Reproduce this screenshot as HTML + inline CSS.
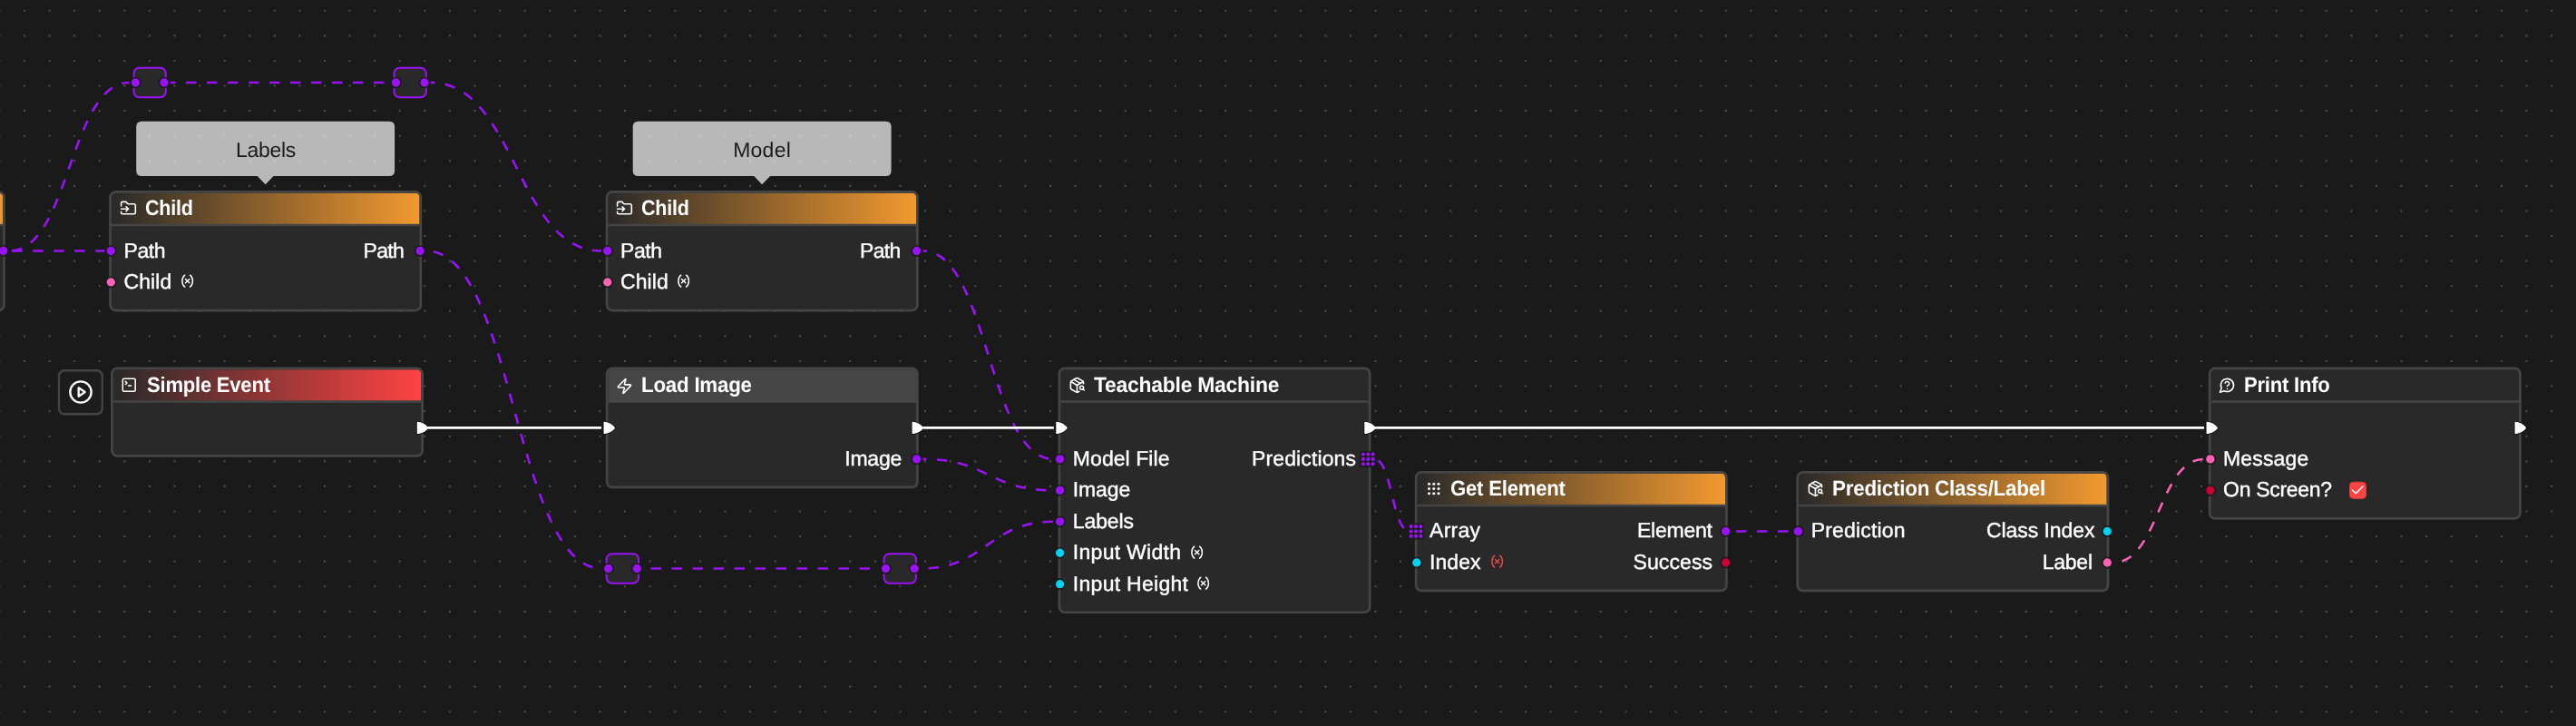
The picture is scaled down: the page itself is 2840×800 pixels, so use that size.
<!DOCTYPE html><html lang="en"><head><meta charset="utf-8"><title>Node graph</title><style>
html,body{margin:0;padding:0}
body{width:2840px;height:800px;overflow:hidden;background:#1a1a1a;position:relative;font-family:"Liberation Sans",sans-serif}
.layer{position:absolute;left:0;top:0}
.wrap{position:absolute;left:0;top:0;width:2840px;height:800px;will-change:transform}
.t{position:absolute;white-space:nowrap;line-height:1;color:#fff;text-rendering:geometricPrecision}
.ic{position:absolute;overflow:visible}
</style></head><body><svg class="layer" width="2840" height="800" viewBox="0 0 2840 800"><g stroke="#4c4c4c" stroke-width="2.1" stroke-dasharray="2.1 25.485" fill="none"><path d="M-1.65,11.80 H2838"/><path d="M-1.65,39.39 H2838"/><path d="M-1.65,66.97 H2838"/><path d="M-1.65,94.56 H2838"/><path d="M-1.65,122.14 H2838"/><path d="M-1.65,149.73 H2838"/><path d="M-1.65,177.31 H2838"/><path d="M-1.65,204.90 H2838"/><path d="M-1.65,232.48 H2838"/><path d="M-1.65,260.07 H2838"/><path d="M-1.65,287.65 H2838"/><path d="M-1.65,315.24 H2838"/><path d="M-1.65,342.82 H2838"/><path d="M-1.65,370.40 H2838"/><path d="M-1.65,397.99 H2838"/><path d="M-1.65,425.57 H2838"/><path d="M-1.65,453.16 H2838"/><path d="M-1.65,480.74 H2838"/><path d="M-1.65,508.33 H2838"/><path d="M-1.65,535.91 H2838"/><path d="M-1.65,563.50 H2838"/><path d="M-1.65,591.08 H2838"/><path d="M-1.65,618.67 H2838"/><path d="M-1.65,646.25 H2838"/><path d="M-1.65,673.84 H2838"/><path d="M-1.65,701.43 H2838"/><path d="M-1.65,729.01 H2838"/><path d="M-1.65,756.60 H2838"/><path d="M-1.65,784.18 H2838"/></g></svg><svg class="layer" width="2840" height="800" viewBox="0 0 2840 800"><g fill="none" stroke-width="2.6" stroke-dasharray="11.5 11.5"><path d="M10.65,276.50 L115.40,276.50" stroke="#9a13f8" stroke-dashoffset="20.46"/><path d="M10.65,276.50 C76.62,276.50 76.63,91.00 142.60,91.00" stroke="#9a13f8" stroke-dashoffset="20.70"/><path d="M187.90,91.00 L429.60,91.00" stroke="#9a13f8" stroke-dashoffset="5.90"/><path d="M474.90,91.00 C568.90,91.00 568.90,276.50 662.90,276.50" stroke="#9a13f8" stroke-dashoffset="7.09"/><path d="M470.00,276.50 C566.90,276.50 566.90,626.50 663.80,626.50" stroke="#9a13f8" stroke-dashoffset="15.10"/><path d="M709.10,626.50 L969.70,626.50" stroke="#9a13f8" stroke-dashoffset="14.60"/><path d="M1015.00,626.50 C1088.35,626.50 1088.35,574.80 1161.70,574.80" stroke="#9a13f8" stroke-dashoffset="14.59"/><path d="M1017.50,276.50 C1089.60,276.50 1089.60,505.90 1161.70,505.90" stroke="#9a13f8" stroke-dashoffset="7.18"/><path d="M1017.55,505.90 C1089.62,505.90 1089.62,540.35 1161.70,540.35" stroke="#9a13f8" stroke-dashoffset="7.74"/><path d="M1515.20,505.90 C1534.68,505.90 1534.68,585.50 1554.15,585.50" stroke="#9a13f8" stroke-dashoffset="18.12"/><path d="M1909.55,585.50 L1975.55,585.50" stroke="#9a13f8" stroke-dashoffset="18.55"/><path d="M2330.15,619.95 C2380.05,619.95 2380.05,505.90 2429.95,505.90" stroke="#fa62b5" stroke-dashoffset="13.49"/></g></svg><svg class="layer" width="2840" height="800" viewBox="0 0 2840 800"><defs><linearGradient id="go" x1="0" y1="0" x2="1" y2="0"><stop offset="0" stop-color="#f2992f" stop-opacity="0"/><stop offset="0.03" stop-color="#f2992f" stop-opacity="0.03"/><stop offset="1" stop-color="#f2992f"/></linearGradient><linearGradient id="gr" x1="0" y1="0" x2="1" y2="0"><stop offset="0" stop-color="#ff4343" stop-opacity="0"/><stop offset="0.03" stop-color="#ff4343" stop-opacity="0.03"/><stop offset="1" stop-color="#ff4343"/></linearGradient></defs><rect x="-337.80" y="211.35" width="342.30" height="130.70" rx="5.95" fill="#292929"/><path d="M-336.45,247.30 V217.30 Q-336.45,212.70 -331.85,212.70 H-1.45 Q3.15,212.70 3.15,217.30 V247.30Z" fill="url(#go)"/><rect x="-336.45" y="246.80" width="339.60" height="2.5" fill="#454545"/><rect x="-337.80" y="211.35" width="342.30" height="130.70" rx="5.95" fill="none" stroke="#454545" stroke-width="2.7"/><rect x="121.55" y="211.35" width="342.30" height="130.70" rx="5.95" fill="#292929"/><path d="M122.90,247.30 V217.30 Q122.90,212.70 127.50,212.70 H457.90 Q462.50,212.70 462.50,217.30 V247.30Z" fill="url(#go)"/><rect x="122.90" y="246.80" width="339.60" height="2.5" fill="#454545"/><rect x="121.55" y="211.35" width="342.30" height="130.70" rx="5.95" fill="none" stroke="#454545" stroke-width="2.7"/><rect x="669.05" y="211.35" width="342.30" height="130.70" rx="5.95" fill="#292929"/><path d="M670.40,247.30 V217.30 Q670.40,212.70 675.00,212.70 H1005.40 Q1010.00,212.70 1010.00,217.30 V247.30Z" fill="url(#go)"/><rect x="670.40" y="246.80" width="339.60" height="2.5" fill="#454545"/><rect x="669.05" y="211.35" width="342.30" height="130.70" rx="5.95" fill="none" stroke="#454545" stroke-width="2.7"/><rect x="123.35" y="405.85" width="342.30" height="96.60" rx="5.95" fill="#292929"/><path d="M124.70,441.80 V411.80 Q124.70,407.20 129.30,407.20 H459.70 Q464.30,407.20 464.30,411.80 V441.80Z" fill="url(#gr)"/><rect x="124.70" y="441.30" width="339.60" height="2.5" fill="#454545"/><rect x="123.35" y="405.85" width="342.30" height="96.60" rx="5.95" fill="none" stroke="#454545" stroke-width="2.7"/><rect x="669.10" y="405.85" width="342.30" height="131.10" rx="5.95" fill="#292929"/><path d="M670.45,443.70 V411.80 Q670.45,407.20 675.05,407.20 H1005.45 Q1010.05,407.20 1010.05,411.80 V443.70Z" fill="#464646"/><rect x="669.10" y="405.85" width="342.30" height="131.10" rx="5.95" fill="none" stroke="#454545" stroke-width="2.7"/><rect x="1167.85" y="405.85" width="342.30" height="268.90" rx="5.95" fill="#292929"/><rect x="1169.20" y="441.30" width="339.60" height="2.5" fill="#454545"/><rect x="1167.85" y="405.85" width="342.30" height="268.90" rx="5.95" fill="none" stroke="#454545" stroke-width="2.7"/><rect x="1561.10" y="520.35" width="342.30" height="130.60" rx="5.95" fill="#292929"/><path d="M1562.45,556.30 V526.30 Q1562.45,521.70 1567.05,521.70 H1897.45 Q1902.05,521.70 1902.05,526.30 V556.30Z" fill="url(#go)"/><rect x="1562.45" y="555.80" width="339.60" height="2.5" fill="#454545"/><rect x="1561.10" y="520.35" width="342.30" height="130.60" rx="5.95" fill="none" stroke="#454545" stroke-width="2.7"/><rect x="1981.70" y="520.35" width="342.30" height="130.60" rx="5.95" fill="#292929"/><path d="M1983.05,556.30 V526.30 Q1983.05,521.70 1987.65,521.70 H2318.05 Q2322.65,521.70 2322.65,526.30 V556.30Z" fill="url(#go)"/><rect x="1983.05" y="555.80" width="339.60" height="2.5" fill="#454545"/><rect x="1981.70" y="520.35" width="342.30" height="130.60" rx="5.95" fill="none" stroke="#454545" stroke-width="2.7"/><rect x="2436.10" y="405.85" width="342.30" height="165.50" rx="5.95" fill="#292929"/><rect x="2437.45" y="441.30" width="339.60" height="2.5" fill="#454545"/><rect x="2436.10" y="405.85" width="342.30" height="165.50" rx="5.95" fill="none" stroke="#454545" stroke-width="2.7"/><rect x="2590.5" y="531.3" width="18" height="18" rx="4" fill="#ff4444" stroke="#e03c3c" stroke-width="1"/><path d="M2593.4,540 L2597.3,543.7 L2604.9,535.9" fill="none" stroke="#fff" stroke-width="1.5" stroke-linecap="round" stroke-linejoin="round"/><rect x="64.95" y="408.3" width="47.8" height="48" rx="6" fill="#1c1c1c" stroke="#444" stroke-width="2.4"/><rect x="147.50" y="74.75" width="35.3" height="32.5" rx="6" fill="#292929" stroke="#9a13f8" stroke-width="2.0"/><rect x="434.50" y="74.75" width="35.3" height="32.5" rx="6" fill="#292929" stroke="#9a13f8" stroke-width="2.0"/><rect x="668.70" y="610.25" width="35.3" height="32.5" rx="6" fill="#292929" stroke="#9a13f8" stroke-width="2.0"/><rect x="974.60" y="610.25" width="35.3" height="32.5" rx="6" fill="#292929" stroke="#9a13f8" stroke-width="2.0"/><path d="M156.20,133.70 H429.10 Q435.10,133.70 435.10,139.70 V188.05 Q435.10,194.05 429.10,194.05 H301.60 L292.65,203.15 L283.70,194.05 H156.20 Q150.20,194.05 150.20,188.05 V139.70 Q150.20,133.70 156.20,133.70Z" fill="#fff" fill-opacity=".69"/><path d="M703.70,133.70 H976.60 Q982.60,133.70 982.60,139.70 V188.05 Q982.60,194.05 976.60,194.05 H849.10 L840.15,203.15 L831.20,194.05 H703.70 Q697.70,194.05 697.70,188.05 V139.70 Q697.70,133.70 703.70,133.70Z" fill="#fff" fill-opacity=".69"/></svg><div class="wrap"><svg class="ic" style="left:131.70px;top:220.15px;color:#fff" width="18.9" height="18.9" viewBox="0 0 24 24" fill="none" stroke="currentColor" stroke-width="2" stroke-linecap="round" stroke-linejoin="round"><path d="M2 9V5a2 2 0 0 1 2-2h3.9a2 2 0 0 1 1.69.9l.81 1.2a2 2 0 0 0 1.67.9H20a2 2 0 0 1 2 2v10a2 2 0 0 1-2 2H4a2 2 0 0 1-2-2v-1"/><path d="M2 13h10"/><path d="m9 16 3-3-3-3"/></svg><span class="t" style="left:159.70px;top:218.00px;font-size:23.5px;font-weight:700;transform:scaleX(0.9160);transform-origin:0 0;letter-spacing:-0.250px;color:#fff">Child</span><span class="t" style="left:136.50px;top:265.00px;font-size:23.0px;-webkit-text-stroke:0.4px #fff;letter-spacing:-0.437px;color:#fff">Path</span><span class="t" style="left:136.50px;top:299.00px;font-size:23.0px;-webkit-text-stroke:0.4px #fff;letter-spacing:0.083px;color:#fff">Child</span><svg class="ic" style="left:197.80px;top:301.40px;color:#fff" width="17.3" height="17.3" viewBox="0 0 24 24" fill="none" stroke="currentColor" stroke-width="2" stroke-linecap="round" stroke-linejoin="round"><path d="M8 21s-4-3-4-9 4-9 4-9"/><path d="M16 3s4 3 4 9-4 9-4 9"/><path d="M15 9l-6 6"/><path d="M9 9l6 6"/></svg><span class="t" style="left:400.50px;top:265.00px;font-size:23.0px;-webkit-text-stroke:0.4px #fff;letter-spacing:-0.704px;color:#fff">Path</span><svg class="ic" style="left:679.20px;top:220.15px;color:#fff" width="18.9" height="18.9" viewBox="0 0 24 24" fill="none" stroke="currentColor" stroke-width="2" stroke-linecap="round" stroke-linejoin="round"><path d="M2 9V5a2 2 0 0 1 2-2h3.9a2 2 0 0 1 1.69.9l.81 1.2a2 2 0 0 0 1.67.9H20a2 2 0 0 1 2 2v10a2 2 0 0 1-2 2H4a2 2 0 0 1-2-2v-1"/><path d="M2 13h10"/><path d="m9 16 3-3-3-3"/></svg><span class="t" style="left:707.20px;top:218.00px;font-size:23.5px;font-weight:700;transform:scaleX(0.9160);transform-origin:0 0;letter-spacing:-0.250px;color:#fff">Child</span><span class="t" style="left:684.00px;top:265.00px;font-size:23.0px;-webkit-text-stroke:0.4px #fff;letter-spacing:-0.437px;color:#fff">Path</span><span class="t" style="left:684.00px;top:299.00px;font-size:23.0px;-webkit-text-stroke:0.4px #fff;letter-spacing:0.083px;color:#fff">Child</span><svg class="ic" style="left:745.30px;top:301.40px;color:#fff" width="17.3" height="17.3" viewBox="0 0 24 24" fill="none" stroke="currentColor" stroke-width="2" stroke-linecap="round" stroke-linejoin="round"><path d="M8 21s-4-3-4-9 4-9 4-9"/><path d="M16 3s4 3 4 9-4 9-4 9"/><path d="M15 9l-6 6"/><path d="M9 9l6 6"/></svg><span class="t" style="left:948.00px;top:265.00px;font-size:23.0px;-webkit-text-stroke:0.4px #fff;letter-spacing:-0.704px;color:#fff">Path</span><svg class="ic" style="left:133.10px;top:415.15px;color:#fff" width="18.5" height="18.5" viewBox="0 0 24 24" fill="none" stroke="currentColor" stroke-width="2" stroke-linecap="round" stroke-linejoin="round"><rect width="18" height="18" x="3" y="3" rx="2"/><path d="m7 11 2-2-2-2"/><path d="M11 13h4"/></svg><span class="t" style="left:161.50px;top:413.00px;font-size:23.5px;font-weight:700;transform:scaleX(0.9390);transform-origin:0 0;letter-spacing:-0.250px;color:#fff">Simple Event</span><svg class="ic" style="left:678.90px;top:415.90px;color:#fff" width="18.9" height="18.9" viewBox="0 0 24 24" fill="none" stroke="currentColor" stroke-width="2" stroke-linecap="round" stroke-linejoin="round"><path d="M4 14a1 1 0 0 1-.78-1.63l9.9-10.2a.5.5 0 0 1 .86.46l-1.92 6.02A1 1 0 0 0 13 10h7a1 1 0 0 1 .78 1.63l-9.9 10.2a.5.5 0 0 1-.86-.46l1.92-6.02A1 1 0 0 0 11 14z"/></svg><span class="t" style="left:707.25px;top:413.00px;font-size:23.5px;font-weight:700;transform:scaleX(0.9506);transform-origin:0 0;letter-spacing:-0.250px;color:#fff">Load Image</span><span class="t" style="left:931.25px;top:494.00px;font-size:23.0px;-webkit-text-stroke:0.4px #fff;letter-spacing:-0.229px;color:#fff">Image</span><svg class="ic" style="left:1177.70px;top:414.90px;color:#fff" width="18.9" height="18.9" viewBox="0 0 24 24" fill="none" stroke="currentColor" stroke-width="2" stroke-linecap="round" stroke-linejoin="round"><path d="M21 10V8a2 2 0 0 0-1-1.73l-7-4a2 2 0 0 0-2 0l-7 4A2 2 0 0 0 3 8v8a2 2 0 0 0 1 1.73l7 4a2 2 0 0 0 2 0l2-1.14"/><path d="m7.5 4.27 9 5.15"/><path d="M3.29 7 12 12l8.71-5"/><path d="M12 22V12"/><circle cx="18.5" cy="15.5" r="2.5"/><path d="M20.27 17.27 22 19"/></svg><span class="t" style="left:1206.00px;top:413.00px;font-size:23.5px;font-weight:700;transform:scaleX(0.9749);transform-origin:0 0;letter-spacing:-0.250px;color:#fff">Teachable Machine</span><span class="t" style="left:1182.80px;top:494.00px;font-size:23.0px;-webkit-text-stroke:0.4px #fff;letter-spacing:0.067px;color:#fff">Model File</span><span class="t" style="left:1380.00px;top:494.00px;font-size:23.0px;-webkit-text-stroke:0.4px #fff;letter-spacing:0.122px;color:#fff">Predictions</span><span class="t" style="left:1182.80px;top:528.00px;font-size:23.0px;-webkit-text-stroke:0.4px #fff;letter-spacing:-0.117px;color:#fff">Image</span><span class="t" style="left:1182.80px;top:563.00px;font-size:23.0px;-webkit-text-stroke:0.4px #fff;letter-spacing:-0.116px;color:#fff">Labels</span><span class="t" style="left:1182.80px;top:597.00px;font-size:23.0px;-webkit-text-stroke:0.4px #fff;letter-spacing:0.287px;color:#fff">Input Width</span><svg class="ic" style="left:1310.80px;top:599.70px;color:#fff" width="17.3" height="17.3" viewBox="0 0 24 24" fill="none" stroke="currentColor" stroke-width="2" stroke-linecap="round" stroke-linejoin="round"><path d="M8 21s-4-3-4-9 4-9 4-9"/><path d="M16 3s4 3 4 9-4 9-4 9"/><path d="M15 9l-6 6"/><path d="M9 9l6 6"/></svg><span class="t" style="left:1182.80px;top:632.00px;font-size:23.0px;-webkit-text-stroke:0.4px #fff;letter-spacing:0.287px;color:#fff">Input Height</span><svg class="ic" style="left:1317.80px;top:634.15px;color:#fff" width="17.3" height="17.3" viewBox="0 0 24 24" fill="none" stroke="currentColor" stroke-width="2" stroke-linecap="round" stroke-linejoin="round"><path d="M8 21s-4-3-4-9 4-9 4-9"/><path d="M16 3s4 3 4 9-4 9-4 9"/><path d="M15 9l-6 6"/><path d="M9 9l6 6"/></svg><svg class="ic" style="left:1570.55px;top:529.05px;color:#fff" width="18.9" height="18.9" viewBox="0 0 24 24" fill="none" stroke="currentColor" stroke-width="2" stroke-linecap="round" stroke-linejoin="round"><g fill="currentColor" stroke="none"><circle cx="5.75" cy="5.35" r="1.93"/><circle cx="12.40" cy="5.35" r="1.93"/><circle cx="19.05" cy="5.35" r="1.93"/><circle cx="5.75" cy="12.00" r="1.93"/><circle cx="12.40" cy="12.00" r="1.93"/><circle cx="19.05" cy="12.00" r="1.93"/><circle cx="5.75" cy="18.65" r="1.93"/><circle cx="12.40" cy="18.65" r="1.93"/><circle cx="19.05" cy="18.65" r="1.93"/></g></svg><span class="t" style="left:1599.25px;top:527.00px;font-size:23.5px;font-weight:700;transform:scaleX(0.9434);transform-origin:0 0;letter-spacing:-0.250px;color:#fff">Get Element</span><span class="t" style="left:1576.05px;top:573.00px;font-size:23.0px;-webkit-text-stroke:0.4px #fff;letter-spacing:0.251px;color:#fff">Array</span><span class="t" style="left:1576.05px;top:608.00px;font-size:23.0px;-webkit-text-stroke:0.4px #fff;letter-spacing:0.048px;color:#fff">Index</span><svg class="ic" style="left:1642.00px;top:610.40px;color:#e5484d" width="17.3" height="17.3" viewBox="0 0 24 24" fill="none" stroke="currentColor" stroke-width="2" stroke-linecap="round" stroke-linejoin="round"><path d="M8 21s-4-3-4-9 4-9 4-9"/><path d="M16 3s4 3 4 9-4 9-4 9"/><path d="M15 9l-6 6"/><path d="M9 9l6 6"/></svg><span class="t" style="left:1805.00px;top:573.00px;font-size:23.0px;-webkit-text-stroke:0.4px #fff;letter-spacing:-0.227px;color:#fff">Element</span><span class="t" style="left:1800.50px;top:608.00px;font-size:23.0px;-webkit-text-stroke:0.4px #fff;letter-spacing:0.097px;color:#fff">Success</span><svg class="ic" style="left:1991.55px;top:529.40px;color:#fff" width="18.9" height="18.9" viewBox="0 0 24 24" fill="none" stroke="currentColor" stroke-width="2" stroke-linecap="round" stroke-linejoin="round"><path d="M21 10V8a2 2 0 0 0-1-1.73l-7-4a2 2 0 0 0-2 0l-7 4A2 2 0 0 0 3 8v8a2 2 0 0 0 1 1.73l7 4a2 2 0 0 0 2 0l2-1.14"/><path d="m7.5 4.27 9 5.15"/><path d="M3.29 7 12 12l8.71-5"/><path d="M12 22V12"/><circle cx="18.5" cy="15.5" r="2.5"/><path d="M20.27 17.27 22 19"/></svg><span class="t" style="left:2019.85px;top:527.00px;font-size:23.5px;font-weight:700;transform:scaleX(0.9528);transform-origin:0 0;letter-spacing:-0.250px;color:#fff">Prediction Class/Label</span><span class="t" style="left:1996.65px;top:573.00px;font-size:23.0px;-webkit-text-stroke:0.4px #fff;letter-spacing:0.174px;color:#fff">Prediction</span><span class="t" style="left:2190.00px;top:573.00px;font-size:23.0px;-webkit-text-stroke:0.4px #fff;letter-spacing:-0.067px;color:#fff">Class Index</span><span class="t" style="left:2251.75px;top:608.00px;font-size:23.0px;-webkit-text-stroke:0.4px #fff;letter-spacing:-0.258px;color:#fff">Label</span><svg class="ic" style="left:2445.85px;top:414.60px;color:#fff" width="18.9" height="18.9" viewBox="0 0 24 24" fill="none" stroke="currentColor" stroke-width="2" stroke-linecap="round" stroke-linejoin="round"><path d="M7.9 20A9 9 0 1 0 4 16.1L2 22Z"/><path d="M9.09 9a3 3 0 0 1 5.83 1c0 2-3 3-3 3"/><path d="M12 17h.01"/></svg><span class="t" style="left:2474.25px;top:413.00px;font-size:23.5px;font-weight:700;transform:scaleX(0.9393);transform-origin:0 0;letter-spacing:-0.250px;color:#fff">Print Info</span><span class="t" style="left:2451.05px;top:494.00px;font-size:23.0px;-webkit-text-stroke:0.4px #fff;letter-spacing:0.144px;color:#fff">Message</span><span class="t" style="left:2451.05px;top:528.00px;font-size:23.0px;-webkit-text-stroke:0.4px #fff;letter-spacing:-0.309px;color:#fff">On Screen?</span><svg class="ic" style="left:74.80px;top:418.10px;color:#fff" width="28" height="28" viewBox="0 0 24 24" fill="none" stroke="currentColor" stroke-width="2" stroke-linecap="round" stroke-linejoin="round"><circle cx="12" cy="12" r="10"/><path d="M10 8l6 4-6 4z"/></svg><span class="t" style="left:260.00px;top:154.00px;font-size:23.0px;letter-spacing:-0.306px;color:#1a1a1a">Labels</span><span class="t" style="left:808.25px;top:154.00px;font-size:23.0px;letter-spacing:0.212px;color:#1a1a1a">Model</span></div><svg class="layer" width="2840" height="800" viewBox="0 0 2840 800"><circle cx="3.75" cy="276.50" r="5.5" fill="#9a13f8" stroke="#1b1b1b" stroke-width="1.7"/><circle cx="122.30" cy="276.50" r="5.5" fill="#9a13f8" stroke="#1b1b1b" stroke-width="1.7"/><circle cx="122.30" cy="310.95" r="5.5" fill="#fa62b5" stroke="#1b1b1b" stroke-width="1.7"/><circle cx="463.10" cy="276.50" r="5.5" fill="#9a13f8" stroke="#1b1b1b" stroke-width="1.7"/><circle cx="669.80" cy="276.50" r="5.5" fill="#9a13f8" stroke="#1b1b1b" stroke-width="1.7"/><circle cx="669.80" cy="310.95" r="5.5" fill="#fa62b5" stroke="#1b1b1b" stroke-width="1.7"/><circle cx="1010.60" cy="276.50" r="5.5" fill="#9a13f8" stroke="#1b1b1b" stroke-width="1.7"/><path transform="translate(459.80,471.45)" d="M0,-6.6 C5.2,-6.3 9.6,-3.9 12.1,-0.7 Q12.7,0 12.1,0.7 C9.6,3.9 5.2,6.3 0,6.6Z" fill="#fff" stroke="#121212" stroke-width="1.8" paint-order="stroke"/><path transform="translate(665.55,471.45)" d="M0,-6.6 C5.2,-6.3 9.6,-3.9 12.1,-0.7 Q12.7,0 12.1,0.7 C9.6,3.9 5.2,6.3 0,6.6Z" fill="#fff" stroke="#121212" stroke-width="1.8" paint-order="stroke"/><path transform="translate(1005.55,471.45)" d="M0,-6.6 C5.2,-6.3 9.6,-3.9 12.1,-0.7 Q12.7,0 12.1,0.7 C9.6,3.9 5.2,6.3 0,6.6Z" fill="#fff" stroke="#121212" stroke-width="1.8" paint-order="stroke"/><circle cx="1010.65" cy="505.90" r="5.5" fill="#9a13f8" stroke="#1b1b1b" stroke-width="1.7"/><path transform="translate(1164.30,471.45)" d="M0,-6.6 C5.2,-6.3 9.6,-3.9 12.1,-0.7 Q12.7,0 12.1,0.7 C9.6,3.9 5.2,6.3 0,6.6Z" fill="#fff" stroke="#121212" stroke-width="1.8" paint-order="stroke"/><path transform="translate(1504.30,471.45)" d="M0,-6.6 C5.2,-6.3 9.6,-3.9 12.1,-0.7 Q12.7,0 12.1,0.7 C9.6,3.9 5.2,6.3 0,6.6Z" fill="#fff" stroke="#121212" stroke-width="1.8" paint-order="stroke"/><circle cx="1168.60" cy="505.90" r="5.5" fill="#9a13f8" stroke="#1b1b1b" stroke-width="1.7"/><rect x="1499.40" y="497.00" width="17.8" height="17.8" fill="#1c1c1c"/><circle cx="1502.95" cy="500.55" r="2.05" fill="#9a13f8"/><circle cx="1502.95" cy="505.90" r="2.05" fill="#9a13f8"/><circle cx="1502.95" cy="511.25" r="2.05" fill="#9a13f8"/><circle cx="1508.30" cy="500.55" r="2.05" fill="#9a13f8"/><circle cx="1508.30" cy="505.90" r="2.05" fill="#9a13f8"/><circle cx="1508.30" cy="511.25" r="2.05" fill="#9a13f8"/><circle cx="1513.65" cy="500.55" r="2.05" fill="#9a13f8"/><circle cx="1513.65" cy="505.90" r="2.05" fill="#9a13f8"/><circle cx="1513.65" cy="511.25" r="2.05" fill="#9a13f8"/><circle cx="1168.60" cy="540.35" r="5.5" fill="#9a13f8" stroke="#1b1b1b" stroke-width="1.7"/><circle cx="1168.60" cy="574.80" r="5.5" fill="#9a13f8" stroke="#1b1b1b" stroke-width="1.7"/><circle cx="1168.60" cy="609.25" r="5.5" fill="#00d3f2" stroke="#1b1b1b" stroke-width="1.7"/><circle cx="1168.60" cy="643.70" r="5.5" fill="#00d3f2" stroke="#1b1b1b" stroke-width="1.7"/><rect x="1552.15" y="576.60" width="17.8" height="17.8" fill="#1c1c1c"/><circle cx="1555.70" cy="580.15" r="2.05" fill="#9a13f8"/><circle cx="1555.70" cy="585.50" r="2.05" fill="#9a13f8"/><circle cx="1555.70" cy="590.85" r="2.05" fill="#9a13f8"/><circle cx="1561.05" cy="580.15" r="2.05" fill="#9a13f8"/><circle cx="1561.05" cy="585.50" r="2.05" fill="#9a13f8"/><circle cx="1561.05" cy="590.85" r="2.05" fill="#9a13f8"/><circle cx="1566.40" cy="580.15" r="2.05" fill="#9a13f8"/><circle cx="1566.40" cy="585.50" r="2.05" fill="#9a13f8"/><circle cx="1566.40" cy="590.85" r="2.05" fill="#9a13f8"/><circle cx="1561.85" cy="619.95" r="5.5" fill="#00d3f2" stroke="#1b1b1b" stroke-width="1.7"/><circle cx="1902.65" cy="585.50" r="5.5" fill="#9a13f8" stroke="#1b1b1b" stroke-width="1.7"/><circle cx="1902.65" cy="619.95" r="5.5" fill="#c80034" stroke="#1b1b1b" stroke-width="1.7"/><circle cx="1982.45" cy="585.50" r="5.5" fill="#9a13f8" stroke="#1b1b1b" stroke-width="1.7"/><circle cx="2323.25" cy="585.50" r="5.5" fill="#00d3f2" stroke="#1b1b1b" stroke-width="1.7"/><circle cx="2323.25" cy="619.95" r="5.5" fill="#fa62b5" stroke="#1b1b1b" stroke-width="1.7"/><path transform="translate(2432.55,471.45)" d="M0,-6.6 C5.2,-6.3 9.6,-3.9 12.1,-0.7 Q12.7,0 12.1,0.7 C9.6,3.9 5.2,6.3 0,6.6Z" fill="#fff" stroke="#121212" stroke-width="1.8" paint-order="stroke"/><path transform="translate(2772.55,471.45)" d="M0,-6.6 C5.2,-6.3 9.6,-3.9 12.1,-0.7 Q12.7,0 12.1,0.7 C9.6,3.9 5.2,6.3 0,6.6Z" fill="#fff" stroke="#121212" stroke-width="1.8" paint-order="stroke"/><circle cx="2436.85" cy="505.90" r="5.5" fill="#fa62b5" stroke="#1b1b1b" stroke-width="1.7"/><circle cx="2436.85" cy="540.35" r="5.5" fill="#c80034" stroke="#1b1b1b" stroke-width="1.7"/><circle cx="149.50" cy="91.00" r="5.5" fill="#9a13f8" stroke="#1b1b1b" stroke-width="1.7"/><circle cx="181.00" cy="91.00" r="5.5" fill="#9a13f8" stroke="#1b1b1b" stroke-width="1.7"/><circle cx="436.50" cy="91.00" r="5.5" fill="#9a13f8" stroke="#1b1b1b" stroke-width="1.7"/><circle cx="468.00" cy="91.00" r="5.5" fill="#9a13f8" stroke="#1b1b1b" stroke-width="1.7"/><circle cx="670.70" cy="626.50" r="5.5" fill="#9a13f8" stroke="#1b1b1b" stroke-width="1.7"/><circle cx="702.20" cy="626.50" r="5.5" fill="#9a13f8" stroke="#1b1b1b" stroke-width="1.7"/><circle cx="976.60" cy="626.50" r="5.5" fill="#9a13f8" stroke="#1b1b1b" stroke-width="1.7"/><circle cx="1008.10" cy="626.50" r="5.5" fill="#9a13f8" stroke="#1b1b1b" stroke-width="1.7"/><g fill="none" stroke="#fff" stroke-width="2.76"><path d="M471.60,471.45 L663.05,471.45"/><path d="M1017.35,471.45 L1161.80,471.45"/><path d="M1516.10,471.45 L2430.05,471.45"/></g></svg></body></html>
